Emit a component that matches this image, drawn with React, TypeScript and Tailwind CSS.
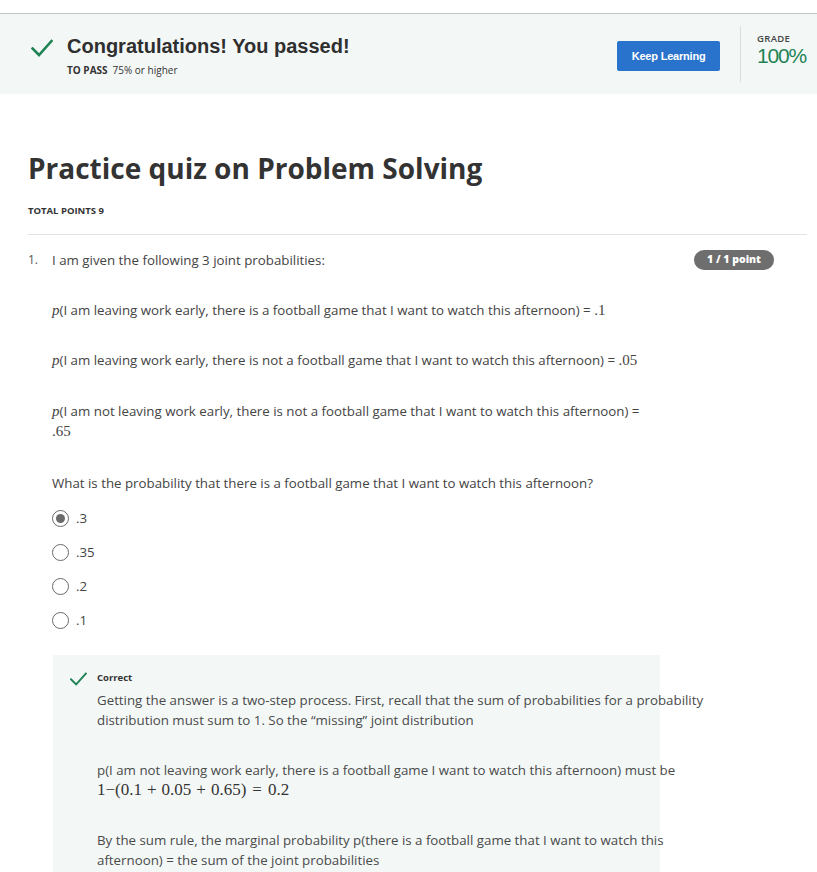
import React from "react";

const sans = { fontFamily: '"Open Sans", "Liberation Sans", sans-serif' };

function Check({ className }: { className?: string }) {
  return (
    <svg viewBox="0 0 22 18" className={className} fill="none">
      <path d="M1.5 9.5 L8 16 L20.5 2" stroke="#1f8354" strokeWidth="2.6" strokeLinecap="square" />
    </svg>
  );
}

function P() {
  return <span className="font-['Liberation_Serif',serif] italic text-[15px]">p</span>;
}

function Num({ children }: { children: React.ReactNode }) {
  return <span className="font-['Liberation_Serif',serif] text-[15px]">{children}</span>;
}

function Radio({ label, checked }: { label: string; checked?: boolean }) {
  return (
    <div className="flex items-center h-[20px]">
      <div className="w-[17px] h-[17px] rounded-full border-[1.5px] border-[#6a6a6a] flex items-center justify-center">
        {checked && <div className="w-[9px] h-[9px] rounded-full bg-[#6a6a6a]" />}
      </div>
      <span className="ml-[7px] text-[13.3px] text-[#444]">{label}</span>
    </div>
  );
}

export default function App() {
  return (
    <div className="w-[817px] h-[872px] overflow-hidden bg-white text-[#333]" style={sans}>
      <div className="h-[13px]" />
      {/* banner */}
      <div className="h-[81px] border-t border-[#c4c4c4] bg-[#f3f8f7] flex">
        <div className="flex-1 flex pl-[31px] pt-[20px]">
          <Check className="w-[22px] h-[18px] mt-[5px]" />
          <div className="ml-[14px]">
            <div className="font-['Liberation_Sans',sans-serif] font-bold text-[20px] leading-[24px] text-[#2f2f2f]">
              Congratulations! You passed!
            </div>
            <div className="mt-[6px] text-[10px] leading-[12px] text-[#333]">
              <span className="font-bold">TO PASS</span>
              <span className="ml-[5px]">75% or higher</span>
            </div>
          </div>
        </div>
        <div className="flex items-start pt-[27px]">
          <button className="w-[103px] h-[30px] rounded-[2px] bg-[#2a73cc] text-white font-['Liberation_Sans',sans-serif] font-bold text-[11px] tracking-[-0.2px]">
            Keep Learning
          </button>
        </div>
        <div className="ml-[20px] my-[12px] border-l border-[#dcdcdc] pl-[16px] pr-[11px] pt-[7px]">
          <div className="text-[9.5px] font-semibold leading-[12px] text-[#444] tracking-[0.3px]">GRADE</div>
          <div className="font-['Liberation_Sans',sans-serif] text-[21px] leading-[22px] text-[#1f8354] tracking-[-1.2px]">
            100%
          </div>
        </div>
      </div>

      {/* title */}
      <div className="px-[28px] pr-[10px]">
        <h1 className="mt-[56px] text-[28px] leading-[36px] font-bold text-[#333]">Practice quiz on Problem Solving</h1>
        <div className="mt-[19px] text-[9.5px] leading-[12px] font-bold text-[#333]">TOTAL POINTS 9</div>
        <div className="mt-[17px] border-t border-[#e3e3e3]" />

        {/* question */}
        <div className="mt-[15px] flex">
          <div className="w-[24px] text-[12px] leading-[20px] text-[#555]">1.</div>
          <div className="flex-1 text-[13.3px] leading-[20px] text-[#444]">
            <div>I am given the following 3 joint probabilities:</div>
            <div className="mt-[30px]">
              <P />(I am leaving work early, there is a football game that I want to watch this afternoon) = <Num>.1</Num>
            </div>
            <div className="mt-[30px]">
              <P />(I am leaving work early, there is not a football game that I want to watch this afternoon) = <Num>.05</Num>
            </div>
            <div className="mt-[31px] w-[590px]">
              <P />(I am not leaving work early, there is not a football game that I want to watch this afternoon) = <Num>.65</Num>
            </div>
            <div className="mt-[32px]">What is the probability that there is a football game that I want to watch this afternoon?</div>
            <div className="mt-[15px] flex flex-col gap-[14px]">
              <Radio label=".3" checked />
              <Radio label=".35" />
              <Radio label=".2" />
              <Radio label=".1" />
            </div>
          </div>
          <div className="w-[80px] h-[20px] mr-[33px] rounded-full bg-[#6e6e6e] text-white text-[10.5px] font-extrabold flex items-center justify-center">
            1 / 1 point
          </div>
        </div>

        {/* feedback */}
        <div className="mt-[25px] ml-[25px] w-[607px] bg-[#f3f8f7] pt-[17px] pl-[17px] pb-[20px] flex">
          <Check className="w-[17px] h-[14px] shrink-0" />
          <div className="ml-[10px] w-[620px] shrink-0">
            <div className="text-[9.5px] leading-[12px] font-bold text-[#333]">Correct</div>
            <div className="mt-[6px] text-[13.3px] leading-[20px] text-[#4a4a4a]">
              <div>
                Getting the answer is a two-step process. First, recall that the sum of probabilities for a probability distribution must sum to 1. So the “missing” joint distribution
              </div>
              <div className="mt-[30px]">
                p(I am not leaving work early, there is a football game I want to watch this afternoon) must be
              </div>
              <div className="font-['Liberation_Serif',serif] text-[17px] leading-[20px] text-[#333]">
                1−(0.1<span className="mx-[5px]">+</span>0.05<span className="mx-[5px]">+</span>0.65)<span className="mx-[6px]">=</span>0.2
              </div>
              <div className="mt-[30px]">
                By the sum rule, the marginal probability p(there is a football game that I want to watch this afternoon) = the sum of the joint probabilities
              </div>
            </div>
          </div>
        </div>
      </div>
    </div>
  );
}
